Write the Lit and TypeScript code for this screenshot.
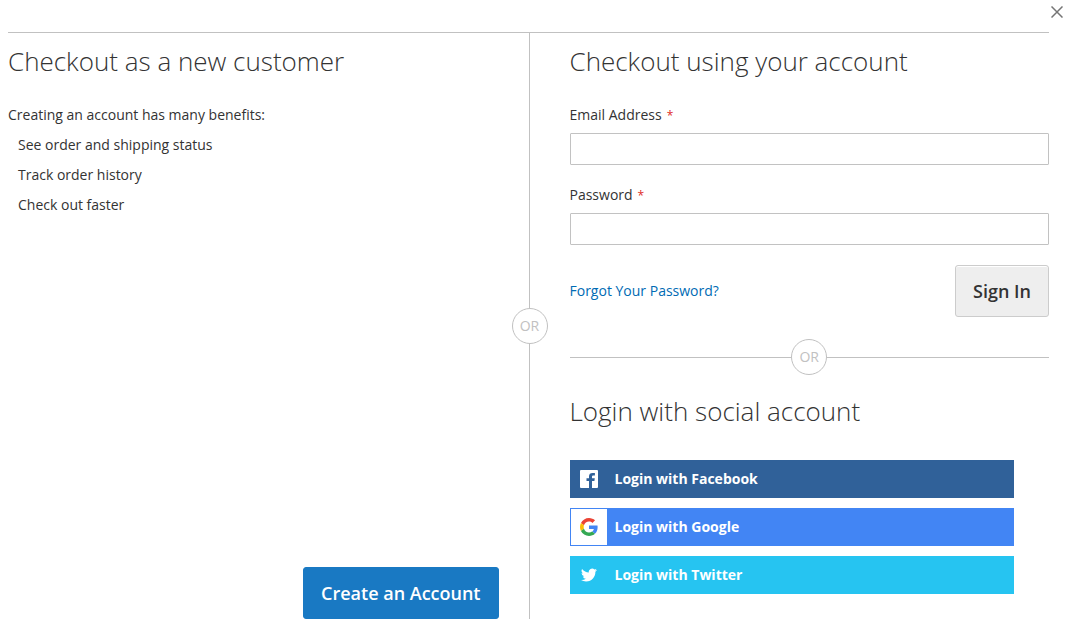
import { LitElement, html, css, svg } from "lit";
import { customElement, state } from "lit/decorators.js";

const icons = {
  facebook: svg`<svg viewBox="0 0 18 18" width="18" height="18" aria-hidden="true">
    <path fill="#fff" d="M17 0H1a1 1 0 0 0-1 1v16a1 1 0 0 0 1 1h8v-7H6.500V8.300H9V6.500C9 4 10.300 2.900 12.600 2.900c1 0 2 .1 2.300.2v2.300h-1.500c-1.200 0-1.400.6-1.400 1.400v1.500h2.800l-.4 2.700H12v7h5a1 1 0 0 0 1-1V1a1 1 0 0 0-1-1z"/>
  </svg>`,
  google: svg`<svg viewBox="0 0 48 48" width="18" height="18" aria-hidden="true">
    <path fill="#EA4335" d="M24 9.500c3.540 0 6.710 1.220 9.210 3.600l6.850-6.850C35.900 2.380 30.470 0 24 0 14.620 0 6.510 5.380 2.560 13.220l7.980 6.190C12.430 13.720 17.740 9.500 24 9.500z"/>
    <path fill="#4285F4" d="M46.980 24.550c0-1.570-.15-3.090-.38-4.550H24v9.020h12.940c-.58 2.960-2.260 5.480-4.780 7.180l7.730 6c4.510-4.180 7.090-10.360 7.090-17.650z"/>
    <path fill="#FBBC05" d="M10.530 28.590c-.48-1.450-.76-2.990-.76-4.590s.27-3.140.76-4.590l-7.980-6.190C.92 16.460 0 20.120 0 24c0 3.880.92 7.540 2.560 10.780l7.970-6.190z"/>
    <path fill="#34A853" d="M24 48c6.480 0 11.930-2.130 15.890-5.810l-7.730-6c-2.150 1.450-4.920 2.300-8.160 2.300-6.260 0-11.570-4.220-13.470-9.910l-7.980 6.190C6.510 42.620 14.620 48 24 48z"/>
  </svg>`,
  twitter: svg`<svg viewBox="0 0 24 24" width="16" height="16" aria-hidden="true">
    <path fill="#fff" d="M23.950 4.570a10 10 0 0 1-2.820.77 4.960 4.960 0 0 0 2.160-2.720c-.95.550-2 .96-3.130 1.180a4.920 4.920 0 0 0-8.380 4.480A13.930 13.930 0 0 1 1.640 3.160a4.920 4.920 0 0 0 1.520 6.570 4.900 4.900 0 0 1-2.230-.61v.06a4.920 4.920 0 0 0 3.950 4.830 4.980 4.980 0 0 1-2.210.08 4.940 4.940 0 0 0 4.600 3.420A9.870 9.870 0 0 1 0 19.540a13.940 13.940 0 0 0 7.550 2.210c9.050 0 14-7.500 14-13.980 0-.21 0-.42-.02-.63a9.940 9.940 0 0 0 2.460-2.550z"/>
  </svg>`,
};

const benefits = ["See order and shipping status", "Track order history", "Check out faster"];

const providers = [
  { id: "facebook", label: "Login with Facebook", icon: icons.facebook },
  { id: "google", label: "Login with Google", icon: icons.google },
  { id: "twitter", label: "Login with Twitter", icon: icons.twitter },
];

@customElement("app-root")
export class AppRoot extends LitElement {
  @state() private email = "";
  @state() private password = "";

  static styles = css`
    :host {
      display: flex;
      flex-direction: column;
      box-sizing: border-box;
      min-height: 100vh;
      padding-bottom: 11px;
      background: #fff;
      color: #333;
      font: 14px/20px "Open Sans", "Noto Sans", sans-serif;
    }
    * { box-sizing: border-box; }
    .header {
      display: flex;
      justify-content: flex-end;
      height: 32px;
      padding: 0 1px;
    }
    .close {
      display: grid;
      place-items: center;
      width: 24px;
      height: 24px;
      padding: 0;
      border: 0;
      background: none;
      cursor: pointer;
    }
    .content {
      flex: 1;
      display: grid;
      grid-template-columns: 1fr 1fr;
      margin: 0 21px 0 8px;
      border-top: 1px solid #c1c1c1;
    }
    .new-customer {
      display: flex;
      flex-direction: column;
      padding: 10px 30px 0 0;
    }
    .existing {
      position: relative;
      padding: 10px 0 0 40px;
      border-left: 1px solid #c1c1c1;
    }
    .title {
      margin: 0;
      font-size: 26px;
      font-weight: 300;
      line-height: 36px;
    }
    .intro { margin: 26px 0 0; }
    .benefits {
      margin: 10px 0 0;
      padding: 0 0 0 10px;
      list-style: none;
      display: grid;
      gap: 10px;
    }
    .actions {
      display: flex;
      justify-content: flex-end;
      margin-top: auto;
    }
    .button {
      padding: 14px 17px;
      border: 1px solid #ccc;
      border-radius: 3px;
      background: #eee;
      box-shadow: inset 0 1px 0 #fff;
      color: #333;
      font: 600 18px/22px "Open Sans", "Noto Sans", sans-serif;
      cursor: pointer;
    }
    .primary {
      border-color: #1979c3;
      background: #1979c3;
      box-shadow: none;
      color: #fff;
    }
    .or {
      display: grid;
      place-items: center;
      width: 36px;
      height: 36px;
      border: 1px solid #c1c1c1;
      border-radius: 50%;
      background: #fff;
      color: #c1c1c1;
    }
    .or-side {
      position: absolute;
      top: 50%;
      left: 0;
      transform: translate(-50%, -50%);
    }
    .form { margin: 26px 0 0; }
    .field { margin-bottom: 20px; }
    .label { display: block; margin-bottom: 8px; }
    .required { margin-left: 5px; color: #e02b27; font-size: 12px; line-height: 12px; }
    .input {
      display: block;
      width: 100%;
      height: 32px;
      padding: 0 9px;
      border: 1px solid #c2c2c2;
      border-radius: 1px;
      background: #fff;
      font: inherit;
    }
    .toolbar {
      display: flex;
      align-items: center;
      justify-content: space-between;
    }
    .link { color: #006bb4; text-decoration: none; }
    .divider {
      display: flex;
      align-items: center;
      margin: 22px 0 18px;
    }
    .divider::before, .divider::after {
      content: "";
      flex: 1;
      height: 1px;
      background: #c1c1c1;
    }
    .social {
      display: grid;
      gap: 10px;
      margin-top: 31px;
      padding-right: 35px;
    }
    .provider {
      display: flex;
      align-items: stretch;
      height: 38px;
      padding: 0;
      border: 1px solid;
      color: #fff;
      font: 700 14px/20px "Open Sans", "Noto Sans", sans-serif;
      cursor: pointer;
    }
    .mark { display: grid; place-items: center; width: 36px; }
    .name { align-self: center; margin-left: 8px; }
    .facebook { background: #306199; border-color: #306199; }
    .google { background: #4285f4; border-color: #4285f4; }
    .google .mark { background: #fff; }
    .twitter { background: #26c4f1; border-color: #26c4f1; }
  `;

  render() {
    return html`
      <div class="header">
        <button class="close" type="button" aria-label="Close">
          <svg width="12" height="12" viewBox="0 0 12 12" aria-hidden="true">
            <path d="M.5.5l11 11M11.500.5l-11 11" stroke="#757575" stroke-width="1.500" fill="none"/>
          </svg>
        </button>
      </div>
      <main class="content">
        <section class="new-customer">
          <h2 class="title">Checkout as a new customer</h2>
          <p class="intro">Creating an account has many benefits:</p>
          <ul class="benefits">${benefits.map((b) => html`<li>${b}</li>`)}</ul>
          <div class="actions">
            <button class="button primary" type="button">Create an Account</button>
          </div>
        </section>
        <section class="existing">
          <span class="or or-side">OR</span>
          <h2 class="title">Checkout using your account</h2>
          <form class="form" @submit=${(e: Event) => e.preventDefault()}>
            <div class="field">
              <label class="label" for="email">Email Address<span class="required">*</span></label>
              <input class="input" id="email" type="email" .value=${this.email}
                @input=${(e: Event) => (this.email = (e.target as HTMLInputElement).value)} />
            </div>
            <div class="field">
              <label class="label" for="password">Password<span class="required">*</span></label>
              <input class="input" id="password" type="password" .value=${this.password}
                @input=${(e: Event) => (this.password = (e.target as HTMLInputElement).value)} />
            </div>
            <div class="toolbar">
              <a class="link" href="#">Forgot Your Password?</a>
              <button class="button" type="submit">Sign In</button>
            </div>
          </form>
          <div class="divider"><span class="or">OR</span></div>
          <h2 class="title">Login with social account</h2>
          <div class="social">
            ${providers.map(
              (p) => html`<button class="provider ${p.id}" type="button">
                <span class="mark">${p.icon}</span><span class="name">${p.label}</span>
              </button>`
            )}
          </div>
        </section>
      </main>
    `;
  }
}
